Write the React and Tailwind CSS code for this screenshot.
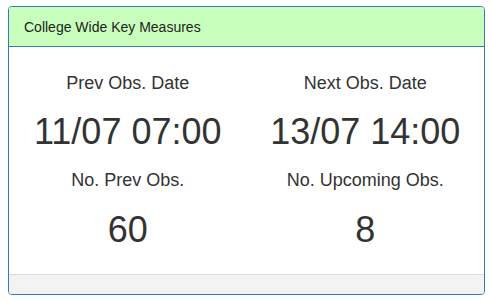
export default function App() {
  const items = [
    { label: "Prev Obs. Date", value: "11/07 07:00" },
    { label: "Next Obs. Date", value: "13/07 14:00" },
    { label: "No. Prev Obs.", value: "60" },
    { label: "No. Upcoming Obs.", value: "8" },
  ];
  return (
    <div
      className="w-[492px] h-[302px] bg-white pt-[6px] pl-[8px] text-[#333]"
      style={{ fontFamily: '"Liberation Sans", Arial, sans-serif' }}
    >
      <div className="w-[477px] h-[289px] border border-[#337ab7] rounded-[4px] flex flex-col overflow-hidden">
        <div className="h-[40px] shrink-0 bg-[#c9ffbd] border-b border-[#337ab7] px-[15px] py-[10px] text-[14px] leading-[20px] text-[#222]">
          College Wide Key Measures
        </div>
        <div className="flex-1 grid grid-cols-2 content-start pt-[26px]">
          {items.slice(0, 2).map((it) => (
            <div key={it.label} className="flex flex-col items-center">
              <div className="text-[18px] leading-[20px]">{it.label}</div>
              <div className="text-[36px] leading-[40px] mt-[19px]">{it.value}</div>
            </div>
          ))}
          {items.slice(2).map((it) => (
            <div key={it.label} className="flex flex-col items-center mt-[18px]">
              <div className="text-[18px] leading-[20px]">{it.label}</div>
              <div className="text-[36px] leading-[40px] mt-[20px]">{it.value}</div>
            </div>
          ))}
        </div>
        <div className="h-[20px] shrink-0 bg-[#f3f3f3] border-t border-[#dddddd]"></div>
      </div>
    </div>
  );
}
